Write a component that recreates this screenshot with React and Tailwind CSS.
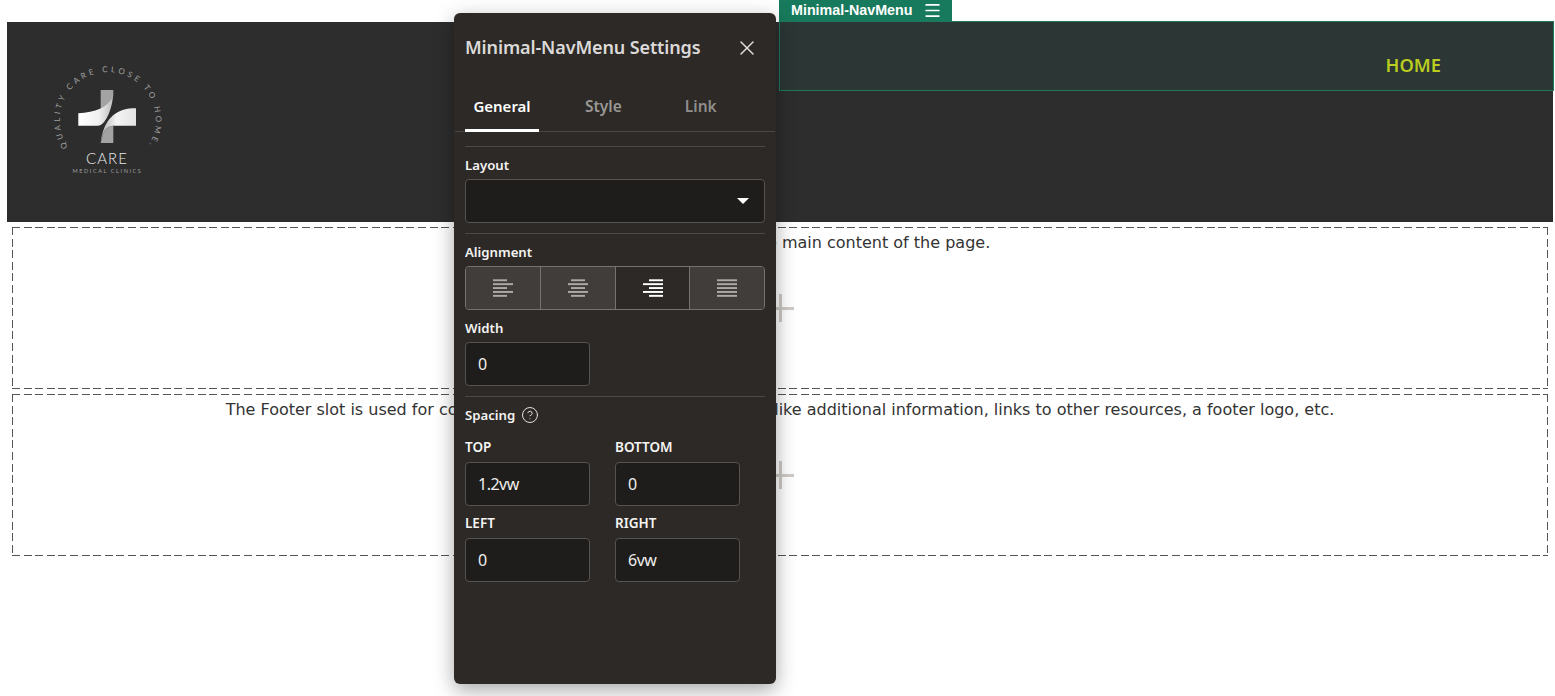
import { X, Menu, CircleHelp } from 'lucide-react'

const UI_FONT = "font-['Noto_Sans',sans-serif]"

// Horizontal line sets for the alignment buttons: [x, width] per row
const ALIGN_ROWS = {
  left: [[0, 14], [0, 20], [0, 14], [0, 20], [0, 14]],
  center: [[3, 14], [0, 20], [3, 14], [0, 20], [3, 14]],
  right: [[6, 14], [0, 20], [6, 14], [0, 20], [6, 14]],
  justify: [[0, 20], [0, 20], [0, 20], [0, 20], [0, 20]],
}

function AlignIcon({ rows }) {
  return (
    <svg width="20" height="18" viewBox="0 0 20 18" fill="currentColor">
      {rows.map(([x, w], i) => (
        <rect key={i} x={x} y={i * 3.9 + 0.3} width={w} height="1.9" />
      ))}
    </svg>
  )
}

function Logo() {
  return (
    <svg width="120" height="120" viewBox="47 62 120 120" className="block">
      <defs>
        <linearGradient id="bandA" x1="0" x2="1" y1="0" y2="0">
          <stop offset="0" stopColor="#ffffff" />
          <stop offset="0.6" stopColor="#f0f0f0" />
          <stop offset="1" stopColor="#bdbdbd" />
        </linearGradient>
        <linearGradient id="bandB" x1="0" x2="1" y1="0" y2="0">
          <stop offset="0" stopColor="#b0b0b0" />
          <stop offset="0.45" stopColor="#f4f4f4" />
          <stop offset="1" stopColor="#e2e2e2" />
        </linearGradient>
        <path id="ring" d="M 68 147 A 48 48 0 1 1 130 162.7" fill="none" />
      </defs>
      <path d="M100.7 90 L113.3 90 L113.3 96 C 110 104 105 109 100.7 110.5 Z" fill="#a3a3a3" />
      <path d="M113.3 125.7 L113.3 143 L100.7 143 C 103 132 106 126 113.3 125.7 Z" fill="#a3a3a3" />
      <path d="M78.3 113.3 C 95 112 108 108 113 96 C 112 110 105 125.7 98 125.7 L78.3 125.7 Z" fill="url(#bandA)" />
      <path d="M136 108.3 C 120 108 104 115 100.7 142.7 C 103 132 106 126 113 125.7 L136 125.7 Z" fill="url(#bandB)" />
      <text fontFamily="Lato, sans-serif" fontSize="8" letterSpacing="3.1" fill="#a0a0a0">
        <textPath href="#ring">QUALITY CARE CLOSE TO HOME.</textPath>
      </text>
      <text x="107" y="163.5" textAnchor="middle" fontFamily="Lato, sans-serif" fontWeight="300" fontSize="15" letterSpacing="1.1" fill="#e8e8e8">
        CARE
      </text>
      <text x="107.5" y="173" textAnchor="middle" fontFamily="Lato, sans-serif" fontSize="5.5" letterSpacing="1.6" fill="#a0a0a0">
        MEDICAL CLINICS
      </text>
    </svg>
  )
}

function Slot({ text }) {
  return (
    <div className="h-[162px] px-px [background:repeating-linear-gradient(to_right,#555_0,#555_8px,transparent_8px,transparent_11.6px)_top/100%_1px_no-repeat,repeating-linear-gradient(to_right,#555_0,#555_8px,transparent_8px,transparent_11.6px)_bottom/100%_1px_no-repeat,repeating-linear-gradient(to_bottom,#555_0,#555_8px,transparent_8px,transparent_11.6px)_left/1px_100%_no-repeat,repeating-linear-gradient(to_bottom,#555_0,#555_8px,transparent_8px,transparent_11.6px)_right/1px_100%_no-repeat] flex flex-col items-center">
      <p className="mt-[5px] text-[16px] leading-[22px] text-[#333333] font-['DejaVu_Sans',sans-serif] whitespace-nowrap">
        {text}
      </p>
      <div className="relative mt-[40px] w-[28px] h-[28px] text-[#cfcbc7]">
        <div className="absolute left-[13px] top-0 w-[3px] h-[28px] bg-current" />
        <div className="absolute left-0 top-[13px] w-[28px] h-[3px] bg-current" />
      </div>
    </div>
  )
}

function InputBox({ value, className = 'mt-[5px]' }) {
  return (
    <div className={`${className} w-[125px] h-[44px] rounded-[4px] border border-[#55524f] bg-[#1e1d1b] flex items-center px-[12px] text-[16px] tracking-[-0.5px] text-[#f0efed]`}>
      {value}
    </div>
  )
}

function Field({ label, value }) {
  return (
    <div className="w-[125px]">
      <div className="text-[13.5px] leading-[18px] font-semibold text-[#f5f4f2] uppercase">{label}</div>
      <InputBox value={value} className="mt-[6px]" />
    </div>
  )
}

function Divider() {
  return <div className="h-px bg-[#4c4a48]" />
}

function SettingsDialog() {
  return (
    <div className={`absolute left-[454px] top-[13px] w-[322px] h-[671px] rounded-[6px] bg-[#2c2926] shadow-[0_6px_20px_rgba(0,0,0,0.35)] ${UI_FONT}`}>
      <div className="h-[70px] pl-[11px] pr-[17px] flex items-center justify-between">
        <h2 className="pb-[2px] text-[18px] font-semibold tracking-[-0.12px] text-[#dcdad8]">Minimal-NavMenu Settings</h2>
        <X size={24} strokeWidth={1.4} className="text-[#e4e2e0]" />
      </div>

      <div className="mx-px h-[49px] border-b border-[#4a4846] flex pl-[10px] text-[15.5px] leading-[22px] font-semibold">
        <div className="w-[74px] h-[49px] border-b-[3px] border-white text-white flex justify-center pt-[12px] text-[15px]">General</div>
        <div className="ml-[46px] pt-[12px] text-[#9a9896]">Style</div>
        <div className="ml-[63px] pt-[12px] text-[#8f8d8b]">Link</div>
      </div>

      <div className="px-[11px]">
        <div className="mt-[14px]"><Divider /></div>

        <div className="mt-[9px] text-[13.2px] leading-[18px] font-semibold text-[#f5f4f2]">Layout</div>
        <div className="mt-[5px] h-[44px] rounded-[4px] border border-[#55524f] bg-[#1e1d1b] flex items-center justify-end pr-[15px]">
          <div className="w-0 h-0 border-x-[6px] border-x-transparent border-t-[6px] border-t-white" />
        </div>

        <div className="mt-[10px]"><Divider /></div>

        <div className="mt-[9px] text-[13.2px] leading-[18px] font-semibold text-[#f5f4f2]">Alignment</div>
        <div className="mt-[5px] h-[44px] rounded-[4px] border border-[#757370] flex overflow-hidden">
          <div className="w-[75px] bg-[#403d3a] text-[#adabaa] flex items-center justify-center border-r border-[#757370]"><AlignIcon rows={ALIGN_ROWS.left} /></div>
          <div className="w-[75px] bg-[#403d3a] text-[#adabaa] flex items-center justify-center border-r border-[#757370]"><AlignIcon rows={ALIGN_ROWS.center} /></div>
          <div className="w-[74px] bg-[#2c2926] text-white flex items-center justify-center border-r border-[#757370]"><AlignIcon rows={ALIGN_ROWS.right} /></div>
          <div className="flex-1 bg-[#403d3a] text-[#adabaa] flex items-center justify-center"><AlignIcon rows={ALIGN_ROWS.justify} /></div>
        </div>

        <div className="mt-[9px] text-[13.2px] leading-[18px] font-semibold text-[#f5f4f2]">Width</div>
        <InputBox value="0" />

        <div className="mt-[10px]"><Divider /></div>

        <div className="mt-[9px] flex items-center gap-[6px]">
          <span className="text-[13.2px] leading-[18px] font-semibold text-[#f5f4f2]">Spacing</span>
          <CircleHelp size={18} strokeWidth={1.3} className="text-[#e4e2e0]" />
        </div>

        <div className="mt-[14px] flex gap-[25px]">
          <Field label="Top" value="1.2vw" />
          <Field label="Bottom" value="0" />
        </div>
        <div className="mt-[8px] flex gap-[25px]">
          <Field label="Left" value="0" />
          <Field label="Right" value="6vw" />
        </div>
      </div>
    </div>
  )
}

export default function App() {
  return (
    <div className="relative w-[1555px] h-[696px] overflow-hidden bg-white pt-[22px] pl-[7px] pr-[2px]">
      <header className="h-[200px] bg-[#2d2d2d] pl-[40px] pt-[40px]">
        <Logo />
      </header>

      <main className="mt-[5px] mx-[5px] flex flex-col gap-[5px]">
        <Slot text="The Main slot is for all the main content of the page." />
        <Slot text="The Footer slot is used for content shown at the bottom of the page like additional information, links to other resources, a footer logo, etc." />
      </main>

      {/* Selected component highlight over the header */}
      <div className={`absolute left-[779px] top-[21px] w-[775px] h-[70px] bg-[#2b3635] border border-[#1d7a5c] flex justify-end pt-[30px] pr-[112px] ${UI_FONT}`}>
        <span className="text-[18.3px] leading-[26px] font-semibold text-[#b9cc1f]">HOME</span>
      </div>
      <div className="absolute left-[779px] top-0 w-[173px] h-[21px] bg-[#187a5c] flex items-center pl-[12px] gap-[10px] text-white font-['Liberation_Sans',sans-serif] text-[14.3px] font-bold">
        <span>Minimal-NavMenu</span>
        <Menu size={19} strokeWidth={2.2} />
      </div>

      <SettingsDialog />
    </div>
  )
}
